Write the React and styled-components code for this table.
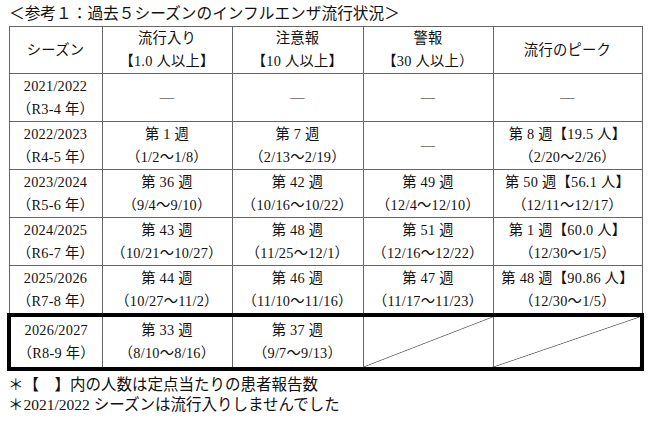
import React from "react";
import styled, { createGlobalStyle } from "styled-components";

const GlobalStyle = createGlobalStyle`
  body {
    margin: 0;
    background: #fff;
    color: #111;
    font-family: "Liberation Serif", "Noto Sans CJK JP", serif;
  }
`;

const Page = styled.div`
  width: 650px;
  height: 423px;
  padding: 4px 0 0 7px;
  box-sizing: border-box;
  display: flex;
  flex-direction: column;
`;

const Title = styled.div`
  font-size: 15.7px;
  line-height: 18px;
  height: 22px;
  padding-left: 2px;
  font-family: "Noto Sans CJK JP", sans-serif;
`;

const Table = styled.table`
  border-collapse: collapse;
  table-layout: fixed;
  width: 633px;
  font-size: 14.3px;
  letter-spacing: 0.25px;
`;

const HeadCell = styled.th`
  font-weight: normal;
  border: 1px solid #666;
  height: 46px;
  padding: 0;
  line-height: 23px;
  text-align: center;
  vertical-align: middle;
`;

const Cell = styled.td`
  border: 1px solid #666;
  height: 47px;
  padding: 0;
  line-height: 23px;
  text-align: center;
  vertical-align: middle;
  white-space: nowrap;
`;

const CurrentCell = styled(Cell)`
  height: 50px;
  border-top: 4px solid #000;
  border-bottom: 4px solid #000;
  border-left: ${p => (p.$first ? "4px solid #000" : "1px solid #666")};
  border-right: ${p => (p.$last ? "4px solid #000" : "1px solid #666")};
  background: ${p =>
    p.$slash
      ? "linear-gradient(to bottom right, transparent calc(50% - 0.7px), #555 50%, transparent calc(50% + 0.7px))"
      : "none"};
`;

const Line = styled.div`
  display: block;
`;

const Notes = styled.div`
  margin-top: 4px;
  padding-left: 1px;
  font-size: 15.5px;
  line-height: 20px;
`;

const rows = [
  ["2021/2022", "（R3-4 年）", null, null, null, null],
  [
    "2022/2023",
    "（R4-5 年）",
    ["第 1 週", "（1/2～1/8）"],
    ["第 7 週", "（2/13～2/19）"],
    null,
    ["第 8 週【19.5 人】", "（2/20～2/26）"],
  ],
  [
    "2023/2024",
    "（R5-6 年）",
    ["第 36 週", "（9/4～9/10）"],
    ["第 42 週", "（10/16～10/22）"],
    ["第 49 週", "（12/4～12/10）"],
    ["第 50 週【56.1 人】", "（12/11～12/17）"],
  ],
  [
    "2024/2025",
    "（R6-7 年）",
    ["第 43 週", "（10/21～10/27）"],
    ["第 48 週", "（11/25～12/1）"],
    ["第 51 週", "（12/16～12/22）"],
    ["第 1 週【60.0 人】", "（12/30～1/5）"],
  ],
  [
    "2025/2026",
    "（R7-8 年）",
    ["第 44 週", "（10/27～11/2）"],
    ["第 46 週", "（11/10～11/16）"],
    ["第 47 週", "（11/17～11/23）"],
    ["第 48 週【90.86 人】", "（12/30～1/5）"],
  ],
];

const Pair = ({ lines }) => (
  <>
    <Line>{lines[0]}</Line>
    <Line>{lines[1]}</Line>
  </>
);

const App = () => (
  <Page>
    <GlobalStyle />
    <Title>＜参考１：過去５シーズンのインフルエンザ流行状況＞</Title>
    <Table>
      <colgroup>
        <col style={{ width: 93 }} />
        <col style={{ width: 130 }} />
        <col style={{ width: 131 }} />
        <col style={{ width: 130 }} />
        <col style={{ width: 149 }} />
      </colgroup>
      <thead>
        <tr>
          <HeadCell>シーズン</HeadCell>
          <HeadCell>
            <Pair lines={["流行入り", "【1.0 人以上】"]} />
          </HeadCell>
          <HeadCell>
            <Pair lines={["注意報", "【10 人以上】"]} />
          </HeadCell>
          <HeadCell>
            <Pair lines={["警報", "【30 人以上）"]} />
          </HeadCell>
          <HeadCell>流行のピーク</HeadCell>
        </tr>
      </thead>
      <tbody>
        {rows.map(([season, era, ...cols]) => (
          <tr key={season}>
            <Cell>
              <Pair lines={[season, era]} />
            </Cell>
            {cols.map((c, i) => (
              <Cell key={i}>{c ? <Pair lines={c} /> : "―"}</Cell>
            ))}
          </tr>
        ))}
        <tr>
          <CurrentCell $first>
            <Pair lines={["2026/2027", "（R8-9 年）"]} />
          </CurrentCell>
          <CurrentCell>
            <Pair lines={["第 33 週", "（8/10～8/16）"]} />
          </CurrentCell>
          <CurrentCell>
            <Pair lines={["第 37 週", "（9/7～9/13）"]} />
          </CurrentCell>
          <CurrentCell $slash />
          <CurrentCell $slash $last />
        </tr>
      </tbody>
    </Table>
    <Notes>
      <div>＊【　】内の人数は定点当たりの患者報告数</div>
      <div>＊2021/2022 シーズンは流行入りしませんでした</div>
    </Notes>
  </Page>
);

export default App;
